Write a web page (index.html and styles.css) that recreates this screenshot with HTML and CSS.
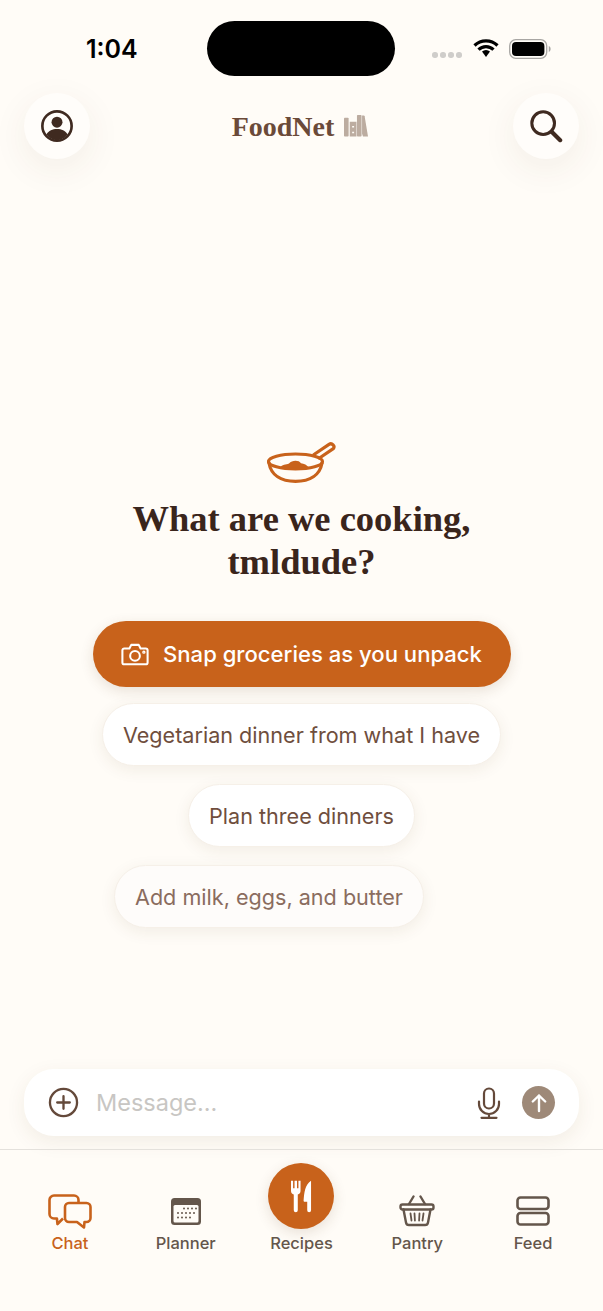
FILE: index.html
```html
<!DOCTYPE html>
<html lang="en">
<head>
    <meta charset="UTF-8">
    <meta name="viewport" content="width=device-width, initial-scale=1.0">
    <title>FoodNet</title>
    <link rel="stylesheet" href="styles.css">
</head>
<body>

<div class="phone">
    <div class="status-bar">
        <div class="clock">1:04</div>
        <div class="island"></div>
        <div class="status-icons">
            <div class="signal"><i></i><i></i><i></i><i></i></div>
            <svg class="wifi" width="26" height="19" viewBox="0 0 26 19">
                <path d="M1.5 6.5a16.5 16.5 0 0 1 23 0M5.5 10.7a10.7 10.7 0 0 1 15 0" fill="none" stroke="#000" stroke-width="3.2"/>
                <path d="M9 12.6a6 6 0 0 1 8 0L13 18z" fill="#000"/>
            </svg>
            <svg class="battery" width="42" height="20" viewBox="0 0 42 20">
                <rect x="0.7" y="0.7" width="37" height="18.6" rx="6" fill="none" stroke="#a8a6a3" stroke-width="1.3"/>
                <rect x="3" y="3" width="32.4" height="14" rx="4" fill="#000"/>
                <path d="M39.8 7v6c1.2-.4 1.8-1.6 1.8-3s-.6-2.600-1.800-3z" fill="#a8a6a3"/>
            </svg>
        </div>
    </div>

    <header class="top-bar">
        <button class="round-btn">
            <svg width="34" height="34" viewBox="0 0 36 36">
                <circle cx="18" cy="18" r="15.500" fill="none" stroke="#3f2a20" stroke-width="2.800"/>
                <circle cx="18" cy="14" r="5.800" fill="#3f2a20"/>
                <path d="M6.800 27c2.400-4.200 6.400-5.800 11.200-5.800s8.800 1.600 11.200 5.800A15 15 0 0 1 18 33a15 15 0 0 1-11.200-6z" fill="#3f2a20"/>
            </svg>
        </button>
        <div class="brand">
            <span class="brand-name">FoodNet</span>
            <svg width="24" height="24" viewBox="0 0 25 24" fill="#bcaca0">
                <rect x="0" y="3.500" width="4.800" height="19.500" rx="0.800"/>
                <path d="M6 7.500h7V23H6zM8.500 12h2v1.500h-2zM8.500 18h2v1.500h-2z" fill-rule="evenodd"/>
                <rect x="13.500" y="0.500" width="4.800" height="22.500" rx="0.800"/>
                <path d="M18.800 1h1.800c.5 0 .8.300.9.800L25 23h-5.200l-1-3z"/>
            </svg>
        </div>
        <button class="round-btn">
            <svg width="34" height="34" viewBox="0 0 36 36" fill="none" stroke="#3f2a20" stroke-linecap="round">
                <circle cx="15" cy="15" r="12" stroke-width="3.200"/>
                <path d="M24 24l9 9" stroke-width="4.400"/>
            </svg>
        </button>
    </header>

    <main class="welcome">
        <svg class="pan" width="70" height="42" viewBox="0 0 70 42" fill="none" stroke="#c8621b" stroke-width="3.200" stroke-linecap="round" stroke-linejoin="round">
            <path d="M13 27c2-4 6-3 9-4.500 3-3.500 10-3.500 12-.2 3 .2 6 1.700 8 4.700-9 1.200-20 1.200-29 0z" fill="#c8621b" stroke="none"/>
            <ellipse cx="28.500" cy="20.500" rx="27" ry="7.500"/>
            <path d="M2 22C4 34 14 40.300 28.500 40.300S53 34 55 22"/>
            <path d="M47 13.500L62 3.400c3-2 6.400 1.800 4.300 4.200L52.500 17"/>
        </svg>
        <h1>What are we cooking,<br>tmldude?</h1>
        <button class="snap-btn">
            <svg width="28" height="23" viewBox="0 0 30 24" fill="none" stroke="#fff" stroke-width="2.200" stroke-linejoin="round">
                <path d="M3.500 5.500h5.500l2-3.800h8l2 3.800h5.500a2 2 0 0 1 2 2v13a2 2 0 0 1-2 2h-23a2 2 0 0 1-2-2v-13a2 2 0 0 1 2-2z"/>
                <circle cx="15" cy="13.500" r="5.200"/>
                <circle cx="24.500" cy="9.500" r="0.700"/>
            </svg>
            Snap groceries as you unpack
        </button>
        <button class="chip">Vegetarian dinner from what I have</button>
        <button class="chip">Plan three dinners</button>
        <button class="chip chip-last">Add milk, eggs, and butter</button>
    </main>

    <div class="composer">
        <svg width="31" height="31" viewBox="0 0 32 32" fill="none" stroke="#64493a" stroke-width="2.400" stroke-linecap="round">
            <circle cx="16" cy="16" r="14"/>
            <path d="M16 9.500v13M9.500 16h13"/>
        </svg>
        <span class="placeholder">Message...</span>
        <svg class="mic" width="24" height="32" viewBox="0 0 24 32" fill="none" stroke="#64493a" stroke-width="2.200" stroke-linecap="round">
            <rect x="7" y="1.500" width="10" height="20" rx="5"/>
            <path d="M2 14.500v2.500a10 10 0 0 0 20 0v-2.500M12 27v3.500M4.500 30.800h15"/>
        </svg>
        <div class="send">
            <svg width="18" height="20" viewBox="0 0 18 20" fill="none" stroke="#fff" stroke-width="2.400" stroke-linecap="round" stroke-linejoin="round">
                <path d="M9 18V2.500M2.800 8.500L9 2.500l6.200 6"/>
            </svg>
        </div>
    </div>

    <nav class="tabs">
        <div class="tab active">
            <div class="tab-icon">
                <svg width="44" height="35" viewBox="0 0 44 35" fill="none" stroke="#c8621b" stroke-width="2.600" stroke-linejoin="round">
                    <path d="M15 24.500l-5.500 5.500-.6-5.500H6a4.500 4.500 0 0 1-4.500-4.500V6A4.500 4.500 0 0 1 6 1.500h20A4.500 4.500 0 0 1 30.500 6v3"/>
                    <path d="M21 9h17.500a4 4 0 0 1 4 4v11a4 4 0 0 1-4 4H36.500l-.5 5.500-7-5.500h-8a4 4 0 0 1-4-4V13a4 4 0 0 1 4-4z"/>
                </svg>
            </div>
            <span>Chat</span>
        </div>
        <div class="tab">
            <div class="tab-icon">
                <svg width="32" height="29" viewBox="0 0 32 29">
                    <rect x="1" y="1" width="30" height="27" rx="3.500" fill="#64564b"/>
                    <rect x="3.500" y="8" width="25" height="17.500" rx="1.500" fill="#fffcf7"/>
                    <g fill="#64564b">
                        <circle cx="14" cy="11.500" r="1"/><circle cx="18" cy="11.500" r="1"/><circle cx="22" cy="11.500" r="1"/><circle cx="26" cy="11.500" r="1"/>
                        <circle cx="8" cy="16" r="1"/><circle cx="12" cy="16" r="1"/><circle cx="16" cy="16" r="1"/><circle cx="20" cy="16" r="1"/><circle cx="24" cy="16" r="1"/>
                        <circle cx="8" cy="20.500" r="1"/><circle cx="12" cy="20.500" r="1"/><circle cx="16" cy="20.500" r="1"/><circle cx="20" cy="20.500" r="1"/>
                    </g>
                </svg>
            </div>
            <span>Planner</span>
        </div>
        <div class="tab">
            <div class="tab-feature">
                <svg class="cutlery" width="21" height="34" viewBox="0 0 22 34" fill="#fff">
                    <path d="M0 1h2.200v8h1.500V1h2.600v8h1.500V1H10v10.500c0 2.200-1.100 3.500-2.900 4V32a2 2 0 0 1-4.200 0V15.500C1.100 15 0 13.700 0 11.500z"/>
                    <path d="M21 1v31a2 2 0 0 1-4 0v-9h-2.600c-.8 0-1.300-.6-1.200-1.400C13.800 14 14.500 5 21 1z"/>
                </svg>
            </div>
            <span>Recipes</span>
        </div>
        <div class="tab">
            <div class="tab-icon">
                <svg width="36" height="32" viewBox="0 0 36 32" fill="none" stroke="#64564b" stroke-width="2.400" stroke-linecap="round" stroke-linejoin="round">
                    <path d="M10 9l4.500-7.500M26 9l-4.500-7.500"/>
                    <rect x="1.500" y="9.500" width="33" height="5" rx="2"/>
                    <path d="M4.500 14.500l2.500 13a3 3 0 0 0 3 2.500h16a3 3 0 0 0 3-2.500l2.500-13"/>
                    <path d="M11.500 18.500l1 7M15.500 18.500l.4 7M20.500 18.500l-.4 7M24.500 18.500l-1 7" stroke-width="1.800"/>
                </svg>
            </div>
            <span>Pantry</span>
        </div>
        <div class="tab">
            <div class="tab-icon">
                <svg width="34" height="30" viewBox="0 0 34 30" fill="none" stroke="#64564b" stroke-width="2.600">
                    <rect x="1.500" y="1.500" width="31" height="11.500" rx="3"/>
                    <rect x="1.500" y="17" width="31" height="11.500" rx="3"/>
                </svg>
            </div>
            <span>Feed</span>
        </div>
    </nav>
</div>

</body>
</html>
```

FILE: styles.css
```css
* {
    box-sizing: border-box;
}
body {
    margin: 0;
    background-color: #fffcf7;
    font-family: Inter, "Liberation Sans", sans-serif;
}
button {
    font-family: inherit;
    border: none;
    cursor: pointer;
}
.phone {
    height: 1311px;
    display: flex;
    flex-direction: column;
    overflow: hidden;
}

/* status bar */
.status-bar {
    height: 93px;
    padding-top: 21px;
    display: grid;
    grid-template-columns: 207px 188px 1fr;
}
.clock {
    height: 55px;
    line-height: 56px;
    padding-left: 86px;
    font-size: 25px;
    font-weight: 600;
    color: #000;
}
.island {
    height: 55px;
    background: #000;
    border-radius: 28px;
}
.status-icons {
    height: 55px;
    padding-left: 37px;
    display: flex;
    align-items: center;
}
.signal {
    display: flex;
    gap: 2.500px;
    margin-top: 13px;
    margin-right: 11px;
}
.signal i {
    width: 5.500px;
    height: 5.500px;
    border-radius: 50%;
    background: #cfcdca;
}
.wifi {
    margin-right: 10px;
}

/* top bar */
.top-bar {
    height: 66px;
    padding: 0 24px;
    display: flex;
    align-items: center;
    justify-content: space-between;
}
.round-btn {
    width: 66px;
    height: 66px;
    padding: 0;
    border-radius: 50%;
    background: #fffdfa;
    box-shadow: 0 10px 36px rgba(90, 60, 30, 0.07);
    display: flex;
    align-items: center;
    justify-content: center;
}
.brand {
    display: flex;
    align-items: center;
    gap: 10px;
    margin-right: 3px;
}
.brand-name {
    padding-top: 2px;
    font-family: "Liberation Serif", serif;
    font-size: 28px;
    font-weight: 700;
    color: #6b4a39;
}

/* welcome block */
.welcome {
    flex: 1;
    padding-top: 282px;
    display: flex;
    flex-direction: column;
    align-items: center;
}
.pan {
    display: block;
    margin-left: 1px;
}
h1 {
    margin: 15px 0 38px;
    font-family: "Liberation Serif", serif;
    font-size: 36.500px;
    line-height: 42.500px;
    font-weight: 700;
    text-align: center;
    color: #3a251c;
}
.snap-btn {
    width: 418px;
    height: 66px;
    margin-bottom: 16px;
    border-radius: 33px;
    background: #c8621b;
    color: #fff;
    font-size: 22.100px;
    font-weight: 500;
    display: flex;
    align-items: center;
    justify-content: center;
    gap: 14px;
    box-shadow: 0 4px 14px rgba(90, 60, 30, 0.14);
}
.chip {
    height: 63px;
    padding: 0 20px;
    margin-bottom: 18px;
    border-radius: 32px;
    background: #fff;
    color: #6f4e3d;
    font-size: 21.600px;
    border: 1px solid #f6f0e8;
    box-shadow: 0 4px 16px rgba(90, 60, 30, 0.08);
}
.chip-last {
    margin-right: 65px;
    margin-bottom: 0;
    background: #fefcfa;
    color: #8a6c5e;
}

/* message box */
.composer {
    height: 67px;
    margin: 0 24px 13px;
    padding: 0 24px;
    border-radius: 30px;
    background: #fff;
    box-shadow: 0 6px 20px rgba(90, 60, 30, 0.08);
    display: flex;
    align-items: center;
}
.placeholder {
    flex: 1;
    margin-left: 17px;
    font-size: 23.500px;
    color: #c8c6c3;
}
.mic {
    margin-right: 21px;
}
.send {
    width: 33px;
    height: 33px;
    border-radius: 50%;
    background: #9e8978;
    display: flex;
    align-items: center;
    justify-content: center;
}

/* bottom tabs */
.tabs {
    height: 162px;
    padding: 13px 12px 0;
    border-top: 1px solid #e4e1dc;
    display: grid;
    grid-template-columns: repeat(5, 1fr);
}
.tab {
    display: flex;
    flex-direction: column;
    align-items: center;
    font-size: 16.500px;
    font-weight: 500;
    color: #64564b;
}
.tab.active {
    color: #c8621b;
}
.tab-icon {
    height: 66px;
    padding-top: 30px;
    display: flex;
    align-items: center;
    justify-content: center;
}
.tab-feature {
    width: 66px;
    height: 66px;
    border-radius: 50%;
    background: #c8621b;
    box-shadow: 0 4px 14px rgba(90, 60, 30, 0.14);
    display: flex;
    align-items: center;
    justify-content: center;
}
.cutlery {
    margin-left: 1px;
}
.tab span {
    margin-top: 4px;
}
```
